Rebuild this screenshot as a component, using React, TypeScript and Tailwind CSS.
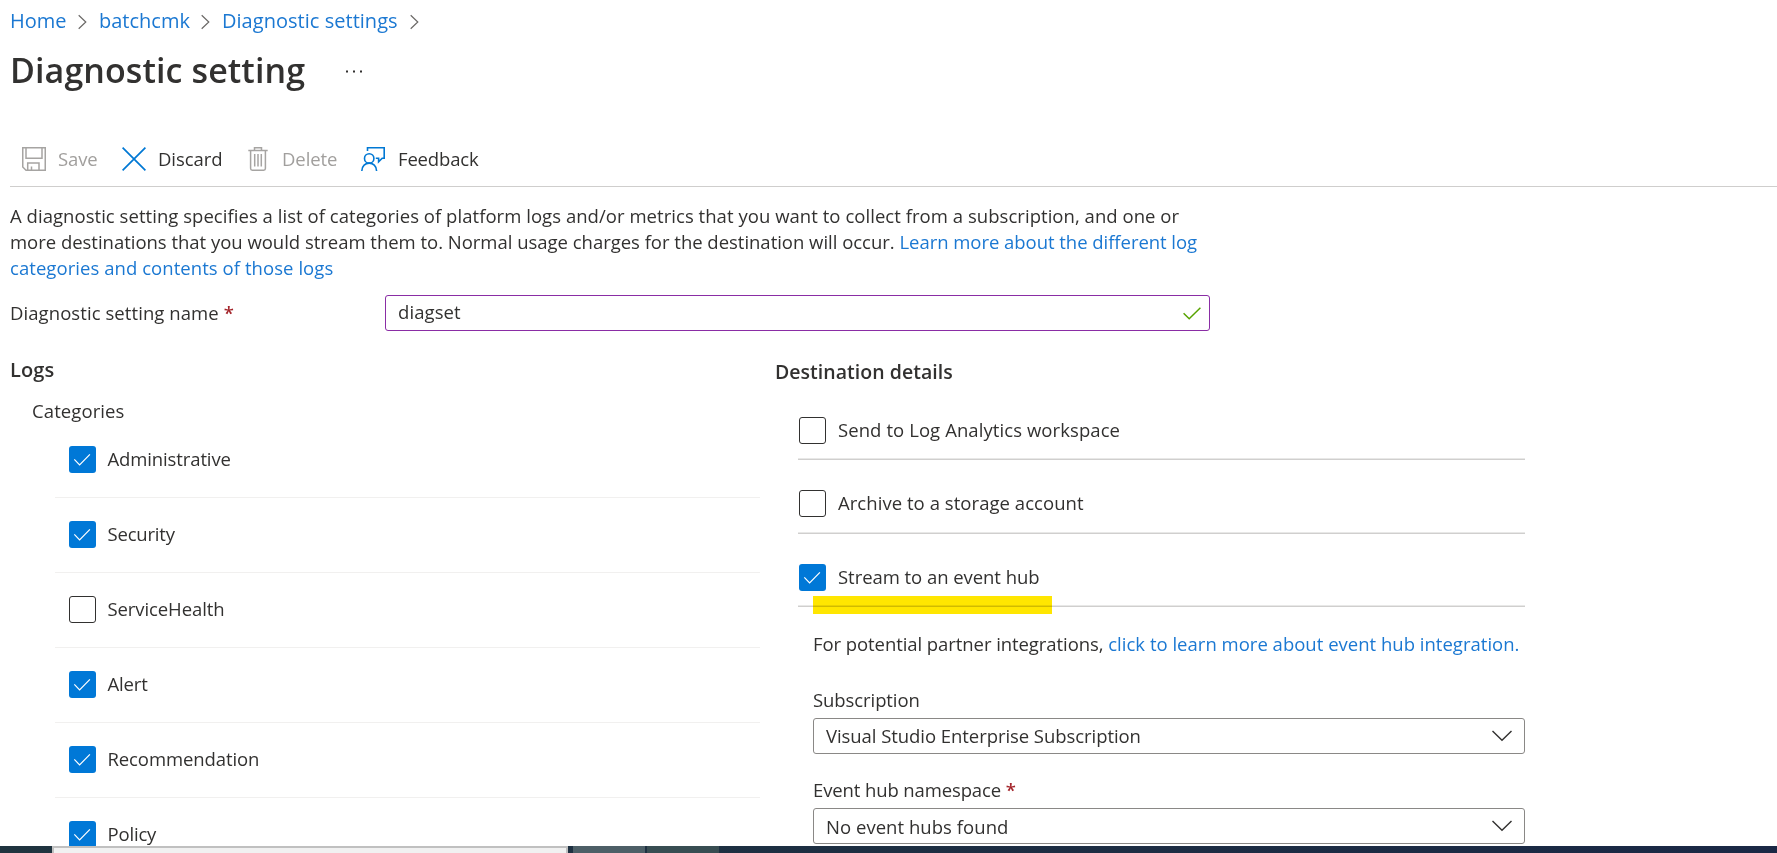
import type { ReactNode } from "react";

function Crumb({ children, cls }: { children: ReactNode; cls: string }) {
  return (
    <>
      <a className={`text-[#1b78d2] ${cls}`}>{children}</a>
      <svg className="mt-px block h-4 w-[9px] shrink-0" viewBox="0 0 9 16" fill="none" stroke="#6b6967" strokeWidth="1.2">
        <path d="M0.7 1.2 L7.8 8 L0.7 14.8" />
      </svg>
    </>
  );
}

function Checkbox({ checked }: { checked: boolean }) {
  if (!checked) {
    return <span className="block h-[27px] w-[27px] shrink-0 rounded-[3px] border border-[#323130] bg-white" />;
  }
  return (
    <span className="block h-[27px] w-[27px] shrink-0 rounded-[3px] bg-[#0078d7]">
      <svg className="block h-[27px] w-[27px]" viewBox="0 0 27 27" fill="none" stroke="#fff" strokeWidth="1.2">
        <path d="M5.3 13.4 L10.6 18.9 L20.9 8.3" />
      </svg>
    </span>
  );
}

function Chevron() {
  return (
    <svg className="block h-3 w-5" viewBox="0 0 20 12" fill="none" stroke="#323130" strokeWidth="1.4">
      <path d="M0.5 0.9 L10 10.2 L19.5 0.9" />
    </svg>
  );
}

function Select({ value, cls }: { value: string; cls: string }) {
  return (
    <div className="flex h-9 w-[712px] items-center justify-between rounded-[3px] border border-[#8a8886] pr-3 pl-3">
      <span className={cls}>{value}</span>
      <Chevron />
    </div>
  );
}

const categories = [
  { name: "Administrative", checked: true, cls: "tracking-[-0.12px]" },
  { name: "Security", checked: true, cls: "tracking-[-0.2px]" },
  { name: "ServiceHealth", checked: false, cls: "tracking-[-0.09px]" },
  { name: "Alert", checked: true, cls: "tracking-[-0.15px]" },
  { name: "Recommendation", checked: true, cls: "tracking-[-0.1px]" },
  { name: "Policy", checked: true, cls: "tracking-[-0.18px]" },
];

export default function App() {
  return (
    <div className="flex h-[853px] w-[1777px] flex-col overflow-hidden bg-white font-['Open_Sans',sans-serif] text-[18.5px] leading-[26px] text-[#323130]">
      <div className="h-[846px] shrink-0 overflow-hidden pl-[10px]">
        <nav className="flex h-[35px] items-center pt-[7px] text-[20px] leading-7">
          <Crumb cls="w-[68px]">Home</Crumb>
          <Crumb cls="ml-3 w-[102px]">batchcmk</Crumb>
          <Crumb cls="ml-3 w-[188px] tracking-[0.03px] whitespace-nowrap">Diagnostic settings</Crumb>
        </nav>

        <header className="mt-[11px] flex h-12 items-center">
          <h1 className="w-[336px] text-[34px] leading-[48px] font-semibold tracking-[0.09px] whitespace-nowrap">Diagnostic setting</h1>
          <svg className="mt-0.5 block h-[3px] w-4" viewBox="0 0 16 3" fill="#323130">
            <rect x="0" y="0.5" width="2" height="2" />
            <rect x="7" y="0.5" width="2" height="2" />
            <rect x="14" y="0.5" width="2" height="2" />
          </svg>
        </header>

        <div className="mt-[43px] flex h-[50px] items-start border-b border-[#cfcecd] pl-3">
          <div className="mt-[9px] flex items-center text-[#a19f9d]">
            <svg className="block h-6 w-6" viewBox="0 0 24 24" fill="none" stroke="#a6a4a2" strokeWidth="1.5">
              <path d="M0.75 0.75 H23.25 V23.25 H4 L0.75 20 Z" />
              <path d="M4 0.75 V11.2 H20 V0.75" />
              <path d="M5.7 23 V16 H17 V23 M9.5 23 V19.5" />
            </svg>
            <span className="ml-3 w-[64px] tracking-[-0.1px]">Save</span>
          </div>
          <div className="mt-[9px] flex items-center">
            <svg className="block h-6 w-6" viewBox="0 0 24 24" fill="none" stroke="#0078d4" strokeWidth="1.7">
              <path d="M0.6 0.6 L23.4 23.4 M23.4 0.6 L0.6 23.4" />
            </svg>
            <span className="ml-3 w-[90px] tracking-[-0.08px]">Discard</span>
          </div>
          <div className="mt-[9px] flex items-center text-[#a19f9d]">
            <svg className="block h-6 w-5" viewBox="0 0 20 24" fill="none" stroke="#a6a4a2" strokeWidth="1.5">
              <path d="M0.3 3.6 H19.7 M6.5 3.4 V0.8 H13.5 V3.4" />
              <path d="M2.6 3.6 V21.5 Q2.6 23.2 4.3 23.2 H15.7 Q17.4 23.2 17.4 21.5 V3.6" />
              <path d="M6.7 7 V19.5 M10 7 V19.5 M13.3 7 V19.5" />
            </svg>
            <span className="ml-[14px] w-[79px] tracking-[-0.09px]">Delete</span>
          </div>
          <div className="mt-[9px] flex items-center">
            <svg className="block h-6 w-6" viewBox="0 0 24 24" fill="none" stroke="#0078d4" strokeWidth="1.6">
              <circle cx="8.2" cy="11.4" r="4.7" />
              <path d="M0.8 24 C0.8 13.5 15.6 13.5 15.6 24" />
              <path d="M6.5 4 V0.8 H23.2 V11.2 H21.2 L17.6 14.8 V11.2 H14.8" />
            </svg>
            <span className="ml-[13px] tracking-[-0.16px]">Feedback</span>
          </div>
        </div>

        <p className="mt-4 h-[78px] whitespace-nowrap">
          <span className="block tracking-[0.043px]">
            A diagnostic setting specifies a list of categories of platform logs and/or metrics that you want to collect from a subscription, and one or
          </span>
          <span className="block tracking-[-0.02px]">
            more destinations that you would stream them to. Normal usage charges for the destination will occur.{" "}
            <a className="tracking-[-0.04px] text-[#1b78d2]">Learn more about the different log</a>
          </span>
          <a className="block tracking-[0.06px] text-[#1b78d2]">categories and contents of those logs</a>
        </p>

        <div className="mt-[14px] flex h-9 items-center">
          <label className="w-[375px] tracking-[0.075px]">
            Diagnostic setting name <span className="font-semibold text-[#a4262c]">*</span>
          </label>
          <div className="flex h-9 w-[825px] items-center justify-between rounded-[3px] border border-[#8a2da5] pr-2 pl-3">
            <span className="pb-0.5 tracking-[0.08px]">diagset</span>
            <svg className="block h-[13px] w-[18px]" viewBox="0 0 18 13" fill="none" stroke="#57a300" strokeWidth="1.5">
              <path d="M0.6 6.2 L6.2 11.8 L17.4 0.7" />
            </svg>
          </div>
        </div>

        <div className="flex">
          <section className="w-[765px] shrink-0">
            <h2 className="mt-[26px] text-[20px] leading-[26px] font-semibold tracking-[0.1px]">Logs</h2>
            <div className="mt-[15px] h-[25px] pl-[22px] tracking-[0.1px]">Categories</div>
            <div className="pl-[45px]">
              {categories.map((c) => (
                <div key={c.name} className="flex h-[75px] w-[705px] items-start border-b border-[#f1f0ef] pt-[23px] pl-[14px]">
                  <Checkbox checked={c.checked} />
                  <span className={`ml-[11.5px] ${c.cls}`}>{c.name}</span>
                </div>
              ))}
            </div>
          </section>

          <section>
            <h2 className="mt-[28px] text-[19.5px] leading-[26px] font-semibold tracking-[0.03px]">Destination details</h2>
            <div className="w-[750px] pl-[23px]">
              <div className="mt-[32px] flex h-[43px] items-start border-b border-[#d0cfce] pl-px shadow-[inset_0_-1px_0_#e8e8e7]">
                <Checkbox checked={false} />
                <span className="ml-3 tracking-[0.08px]">Send to Log Analytics workspace</span>
              </div>
              <div className="mt-[30px] flex h-[44px] items-start border-b border-[#d0cfce] pl-px shadow-[inset_0_-1px_0_#e8e8e7]">
                <Checkbox checked={false} />
                <span className="ml-3 tracking-[0.05px]">Archive to a storage account</span>
              </div>
              <div className="relative mt-[30px] flex h-[43px] items-start border-b border-[#d0cfce] pl-px shadow-[inset_0_-1px_0_#e8e8e7]">
                <Checkbox checked={true} />
                <span className="ml-3 tracking-[-0.05px]">Stream to an event hub</span>
                <span className="absolute top-8 left-[15px] h-[18px] w-[239px] bg-[#ffe600] mix-blend-multiply" />
              </div>
              <div className="pl-[15px]">
                <p className="mt-[24px] whitespace-nowrap tracking-[-0.07px]">
                  For potential partner integrations,{" "}
                  <a className="tracking-[0.01px] text-[#1b78d2]">click to learn more about event hub integration.</a>
                </p>
                <div className="mt-[30px] mb-[5px] tracking-[-0.084px]">Subscription</div>
                <Select value="Visual Studio Enterprise Subscription" cls="tracking-[-0.06px]" />
                <div className="mt-[23px] mb-[5px] tracking-[-0.12px]">
                  Event hub namespace <span className="font-semibold text-[#a4262c]">*</span>
                </div>
                <Select value="No event hubs found" cls="pt-0.5 tracking-[0.04px]" />
              </div>
            </div>
          </section>
        </div>
      </div>

      <footer className="flex h-[7px] shrink-0 bg-gradient-to-r from-[#20343f] to-[#1a2845]">
        <div className="ml-[52px] h-[7px] w-[516px] border-x-2 border-t-2 border-[#c0c0c0] bg-[#f1f1f1]" />
        <div className="ml-[5px] w-[72px] bg-[#4d5f67]" />
        <div className="ml-[2px] w-[72px] bg-[#384d52]" />
      </footer>
    </div>
  );
}
